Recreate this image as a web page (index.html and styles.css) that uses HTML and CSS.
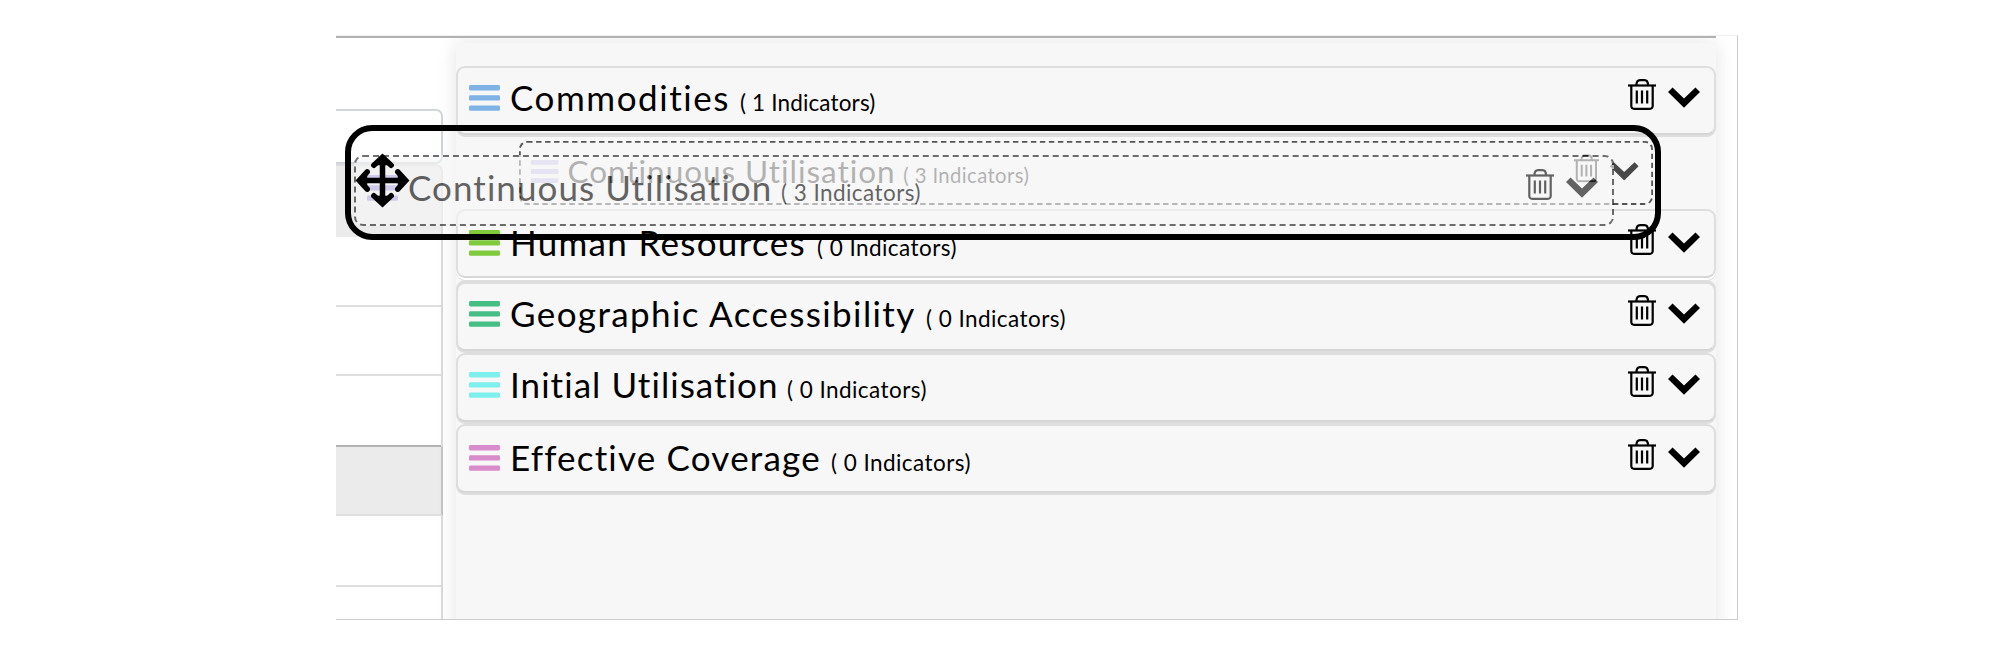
FILE: index.html
```html
<!DOCTYPE html>
<html lang="en">
<head>
<meta charset="utf-8">
<title>Indicator groups</title>
<link rel="stylesheet" href="styles.css">
</head>
<body>
<svg class="defs" aria-hidden="true">
  <symbol id="bars" viewBox="0 0 31 26"><rect width="31" height="5.4" rx="1.4"/><rect y="10.2" width="31" height="5.4" rx="1.4"/><rect y="20.4" width="31" height="5.4" rx="1.4"/></symbol>
  <symbol id="trash" viewBox="0 0 28 31"><g fill="none" stroke="currentColor" stroke-width="2.2"><path d="M0 6.5H28"/><path d="M3.3 6.5V27a2.8 2.8 0 0 0 2.8 2.8H21.900a2.800 2.800 0 0 0 2.800-2.800V6.500"/><path d="M8.500 6.500C8.500 3 9.500 1.200 12 1.200h4.500c2.500 0 3.500 1.800 3.500 5.300"/><path d="M8.800 11.500V24.500M14 11.500V24.500M19.200 11.500V24.500"/></g></symbol>
  <symbol id="chevron" viewBox="0 0 32 21"><path d="M0 5 4.500.5 16 11.500 27.500.5 32 5 16 20.800Z"/></symbol>
</svg>
<main class="frame">
  <aside class="side">
    <div class="side-card"></div>
    <div class="side-card side-card-active"></div>
    <div class="side-list">
      <div class="side-item side-item-1"></div>
      <div class="side-item side-item-2"></div>
      <div class="side-item side-item-3"></div>
      <div class="side-item side-item-active"></div>
      <div class="side-item side-item-5"></div>
    </div>
  </aside>
  <section class="panel">
    <article class="row commodities"><svg class="bars"><use href="#bars"/></svg><h2 class="title">Commodities</h2><span class="count">( 1 Indicators)</span><svg class="trash"><use href="#trash"/></svg><svg class="chevron"><use href="#chevron"/></svg></article>
    <article class="row human"><svg class="bars"><use href="#bars"/></svg><h2 class="title">Human Resources</h2><span class="count">( 0 Indicators)</span><svg class="trash"><use href="#trash"/></svg><svg class="chevron"><use href="#chevron"/></svg></article>
    <article class="row geographic"><svg class="bars"><use href="#bars"/></svg><h2 class="title">Geographic Accessibility</h2><span class="count">( 0 Indicators)</span><svg class="trash"><use href="#trash"/></svg><svg class="chevron"><use href="#chevron"/></svg></article>
    <article class="row initial"><svg class="bars"><use href="#bars"/></svg><h2 class="title">Initial Utilisation</h2><span class="count">( 0 Indicators)</span><svg class="trash"><use href="#trash"/></svg><svg class="chevron"><use href="#chevron"/></svg></article>
    <article class="row effective"><svg class="bars"><use href="#bars"/></svg><h2 class="title">Effective Coverage</h2><span class="count">( 0 Indicators)</span><svg class="trash"><use href="#trash"/></svg><svg class="chevron"><use href="#chevron"/></svg></article>
  </section>
</main>
<article class="row ghost placeholder"><svg class="bars"><use href="#bars"/></svg><h2 class="title">Continuous Utilisation</h2><span class="count">( 3 Indicators)</span><svg class="trash"><use href="#trash"/></svg><svg class="chevron"><use href="#chevron"/></svg></article>
<article class="row ghost dragged"><svg class="bars"><use href="#bars"/></svg><h2 class="title">Continuous Utilisation</h2><span class="count">( 3 Indicators)</span><svg class="trash"><use href="#trash"/></svg><svg class="chevron"><use href="#chevron"/></svg></article>
<div class="highlight"></div>
<svg class="move" viewBox="-27 -27 54 54"><g fill="none" stroke="#000" stroke-width="5.4"><path d="M0-22V22M-22 0H22"/><path fill="#000" d="M-8.500-15 0-22.800 8.500-15M-8.500 15 0 22.800 8.500 15M-15-8.500-22.800 0-15 8.500M15-8.500 22.800 0 15 8.500" stroke-linecap="round"/></g></svg>
</body>
</html>
```
FILE: styles.css
```css
* { box-sizing: border-box; }
body { margin: 0; width: 1999px; height: 672px; background: #fff; color: #000; font-family: Lato, sans-serif; overflow: hidden; }
.defs { position: absolute; width: 0; height: 0; }

.frame { display: flex; width: 1402px; height: 585px; margin: 35px 0 0 336px; border: 1px solid #ccc; border-top-color: #f0f0f0; border-left: 0; overflow: hidden; }
.frame::before { content: ""; position: absolute; width: 1380px; height: 2px; background: #b2b2b2; }

.side { width: 107px; padding-top: 73px; display: flex; flex-direction: column; flex: none; }
.side-card { height: 55px; border: 2px solid #cfd5da; border-left: 0; border-radius: 0 7px 7px 0; }
.side-card-active { height: 73px; background: #ebebeb; border-color: #ddd; border-bottom: 0; border-radius: 0 7px 0 0; }
.side-list { flex: 1; border-right: 2px solid #dadada; }
.side-item { border-bottom: 2px solid #dfdfdf; height: 70px; }
.side-item-2 { height: 69px; }
.side-item-3 { height: 71px; border-bottom-color: #b2b2b2; }
.side-item-active { height: 69px; background: #ebebeb; margin-right: -2px; border-right: 2px solid #c4c4c4; }
.side-item-5 { height: 71px; }

.panel { width: 1260px; margin: 7px 0 0 13px; padding-top: 23px; flex: none; height: 620px; background: #f7f7f7; box-shadow: 0 0 18px rgba(0, 0, 0, .11); }
.row { display: flex; align-items: flex-start; height: 69px; padding: 17px 14px 0 11px; border: 2px solid #dedede; border-bottom-color: #d6d6d6; border-radius: 9px; background: #f7f7f7; box-shadow: 0 2px 0 #dedede; }
.commodities { --ink: #7fb2e5; --w: 230px; --ls: 1.550px; --cs: .15px; }
.human { --ink: #7fcb3c; --w: 307px; --ls: 1.300px; margin-top: 74px; padding-top: 19px; box-shadow: 0 2px 0 #fff, 0 3px 0 #dedede; }
.geographic { --ink: #45bf85; --w: 416px; --ls: 1.400px; margin-top: 4px; box-shadow: 0 2px 0 #dedede, 0 -2px 0 #dedede; }
.initial { --ink: #7df0ee; --w: 277px; --ls: 1.050px; margin-top: 2px; }
.effective { --ink: #d98ccc; --w: 321px; --ls: 1.200px; margin-top: 2px; padding-top: 19px; }
.bars { width: 31px; height: 26px; flex: none; fill: var(--ink); }
.title { margin: -10px 0 0 10px; width: var(--w); flex: none; font-weight: 400; font-size: 35px; line-height: 44px; letter-spacing: var(--ls); white-space: nowrap; }
.count { margin-top: 2px; font-size: 22.500px; line-height: 32px; letter-spacing: var(--cs, .45px); white-space: nowrap; }
.trash { width: 28px; height: 31px; margin: -6px 12px 0 auto; flex: none; }
.chevron { width: 32px; height: 21px; margin-top: 2px; flex: none; }

.ghost { --ink: #bdb4ea; --ls: 1.050px; --w: 373px; position: absolute; border: 2px dashed #111; box-shadow: none; }
.dragged { left: 354px; top: 155px; width: 1260px; height: 71px; padding-top: 18px; opacity: .6; }
.placeholder { left: 519px; top: 141px; width: 1260px; height: 71px; padding-top: 19px; opacity: .7; transform: scale(.9); transform-origin: 0 0; }
.highlight { position: absolute; left: 345px; top: 125px; width: 1316px; height: 115px; border: 6px solid #000; border-radius: 27px; }
.move { position: absolute; left: 355px; top: 153px; width: 55px; height: 55px; }
```
